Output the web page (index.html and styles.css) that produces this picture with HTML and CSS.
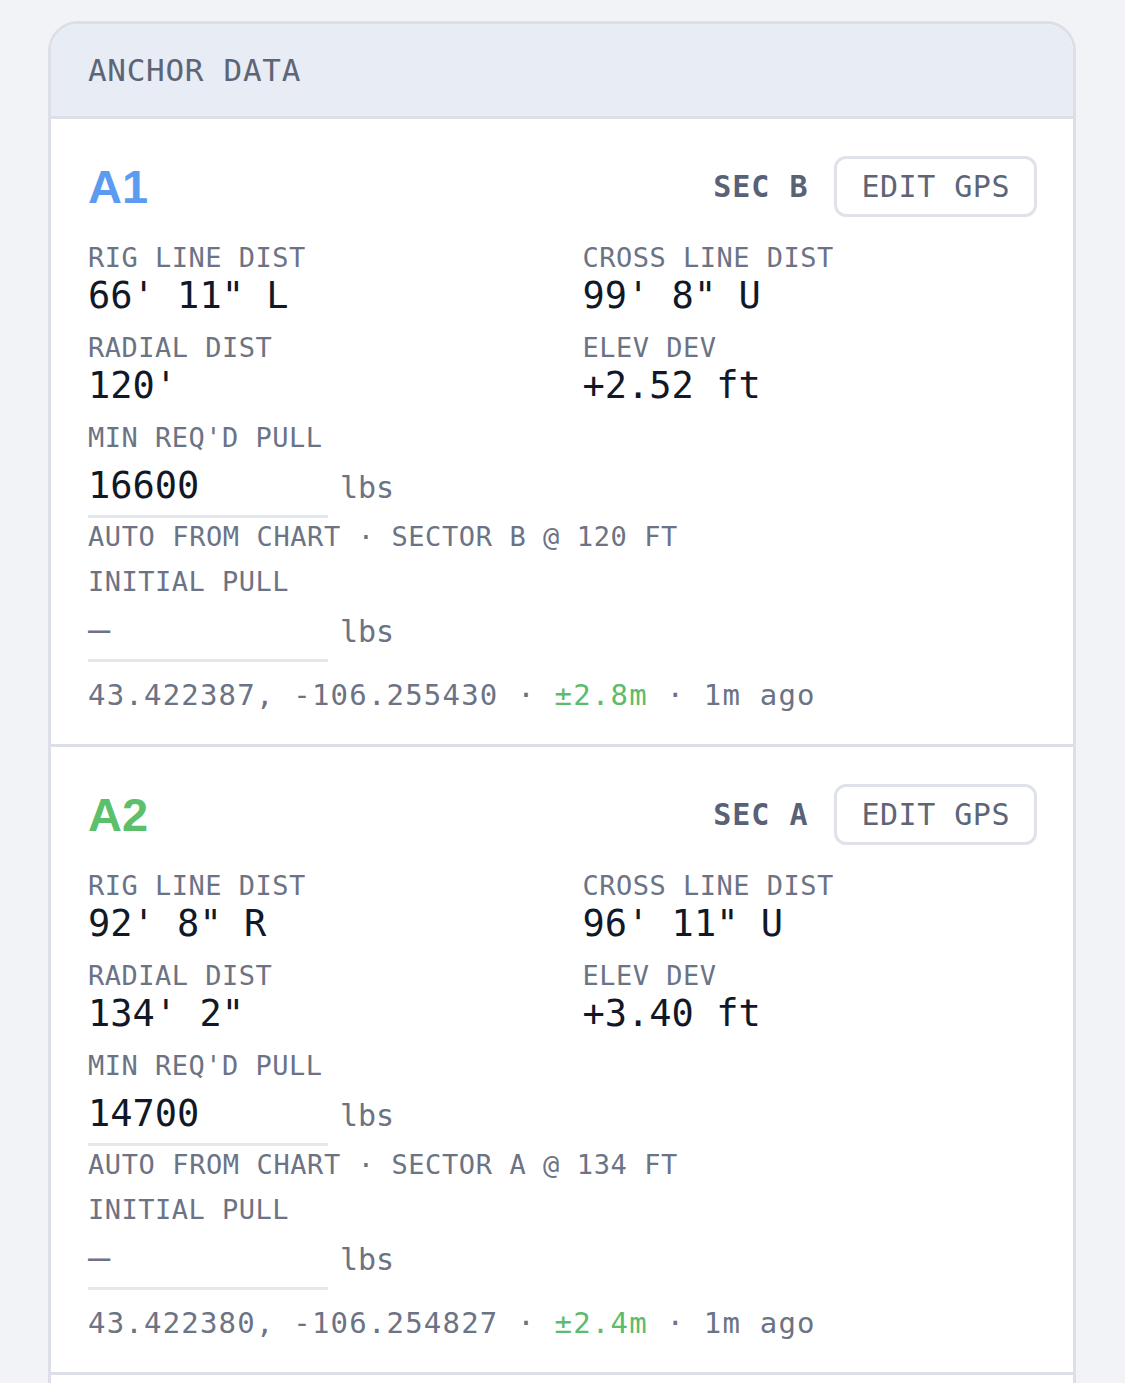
FILE: index.html
```html
<!DOCTYPE html>
<html lang="en">
<head>
    <meta charset="UTF-8">
    <meta name="viewport" content="width=device-width, initial-scale=1.0">
    <title>Anchor Data</title>
    <link rel="stylesheet" href="styles.css">
</head>
<body>
    <div class="card">
        <div class="card-head">ANCHOR DATA</div>

        <div class="anchor">
            <div class="anchor-top">
                <span class="anchor-id blue">A1</span>
                <div class="anchor-actions">
                    <span class="sector">SEC B</span>
                    <button class="edit-btn">EDIT GPS</button>
                </div>
            </div>
            <div class="fields">
                <div class="field">
                    <div class="label">RIG LINE DIST</div>
                    <div class="value">66' 11" L</div>
                </div>
                <div class="field">
                    <div class="label">CROSS LINE DIST</div>
                    <div class="value">99' 8" U</div>
                </div>
                <div class="field">
                    <div class="label">RADIAL DIST</div>
                    <div class="value">120'</div>
                </div>
                <div class="field">
                    <div class="label">ELEV DEV</div>
                    <div class="value">+2.52 ft</div>
                </div>
            </div>
            <div class="label">MIN REQ'D PULL</div>
            <div class="pull-row">
                <div class="pull-input">16600</div>
                <span class="unit">lbs</span>
            </div>
            <div class="hint">AUTO FROM CHART · SECTOR B @ 120 FT</div>
            <div class="label">INITIAL PULL</div>
            <div class="pull-row">
                <div class="pull-input empty">—</div>
                <span class="unit">lbs</span>
            </div>
            <div class="gps">43.422387, -106.255430 · <span class="acc">±2.8m</span> · 1m ago</div>
        </div>

        <div class="anchor">
            <div class="anchor-top">
                <span class="anchor-id green">A2</span>
                <div class="anchor-actions">
                    <span class="sector">SEC A</span>
                    <button class="edit-btn">EDIT GPS</button>
                </div>
            </div>
            <div class="fields">
                <div class="field">
                    <div class="label">RIG LINE DIST</div>
                    <div class="value">92' 8" R</div>
                </div>
                <div class="field">
                    <div class="label">CROSS LINE DIST</div>
                    <div class="value">96' 11" U</div>
                </div>
                <div class="field">
                    <div class="label">RADIAL DIST</div>
                    <div class="value">134' 2"</div>
                </div>
                <div class="field">
                    <div class="label">ELEV DEV</div>
                    <div class="value">+3.40 ft</div>
                </div>
            </div>
            <div class="label">MIN REQ'D PULL</div>
            <div class="pull-row">
                <div class="pull-input">14700</div>
                <span class="unit">lbs</span>
            </div>
            <div class="hint">AUTO FROM CHART · SECTOR A @ 134 FT</div>
            <div class="label">INITIAL PULL</div>
            <div class="pull-row">
                <div class="pull-input empty">—</div>
                <span class="unit">lbs</span>
            </div>
            <div class="gps">43.422380, -106.254827 · <span class="acc">±2.4m</span> · 1m ago</div>
        </div>
    </div>
</body>
</html>
```

FILE: styles.css
```css
body {
    margin: 0;
    padding: 21px 49px 0 48px;
    background: #f1f3f7;
    font-family: 'DejaVu Sans Mono', 'Liberation Mono', monospace;
    color: #111827;
}
.card {
    background: #fff;
    border: 3px solid #dcdfe8;
    border-radius: 30px 30px 0 0;
    overflow: hidden;
    padding-bottom: 60px;
}
.card-head {
    background: #e8ecf4;
    border-bottom: 3px solid #dcdfe8;
    padding: 26px 37px 26px;
    font-size: 31px;
    line-height: 40px;
    color: #5d6577;
    letter-spacing: 0.7px;
}
.anchor {
    padding: 37px 36px 31px 37px;
    border-bottom: 3px solid #dcdfe8;
}
.anchor-top {
    display: flex;
    justify-content: space-between;
    align-items: center;
    height: 60px;
    margin-bottom: 25px;
}
.anchor-id {
    font-family: 'Liberation Sans', Arial, sans-serif;
    font-weight: bold;
    font-size: 47px;
    line-height: 1;
}
.blue { color: #5b9cf0; }
.green { color: #5cbf6b; }
.anchor-actions {
    display: flex;
    align-items: center;
    gap: 25px;
}
.sector {
    font-weight: bold;
    font-size: 30px;
    color: #586176;
    letter-spacing: 1px;
}
.edit-btn {
    font-family: inherit;
    font-size: 30px;
    color: #5d6577;
    background: #fff;
    border: 3px solid #dfe2ea;
    border-radius: 12px;
    height: 61px;
    padding: 0 24px 0 25px;
    letter-spacing: 0.5px;
}
.fields {
    display: grid;
    grid-template-columns: 1fr 1fr;
    column-gap: 40px;
    row-gap: 14px;
    margin-bottom: 14px;
}
.label {
    font-size: 27px;
    line-height: 34px;
    color: #6b7385;
    letter-spacing: 0.5px;
}
.value {
    font-size: 37px;
    line-height: 42px;
    color: #111827;
}
.pull-row {
    display: flex;
    align-items: baseline;
    gap: 12px;
}
.pull-input {
    width: 240px;
    padding: 10px 0 8px;
    border-bottom: 3px solid #e5e7ee;
    font-size: 37px;
    line-height: 42px;
    color: #111827;
}
.pull-input.empty {
    color: #6b7385;
}
.unit {
    font-size: 30px;
    color: #6b7385;
}
.hint {
    margin: 2px 0 11px;
    font-size: 27px;
    line-height: 34px;
    color: #6b7385;
    letter-spacing: 0.6px;
}
.gps {
    margin-top: 15px;
    font-size: 29px;
    line-height: 36px;
    color: #6b7385;
    letter-spacing: 1.2px;
}
.acc {
    color: #5dbb6c;
}
```
